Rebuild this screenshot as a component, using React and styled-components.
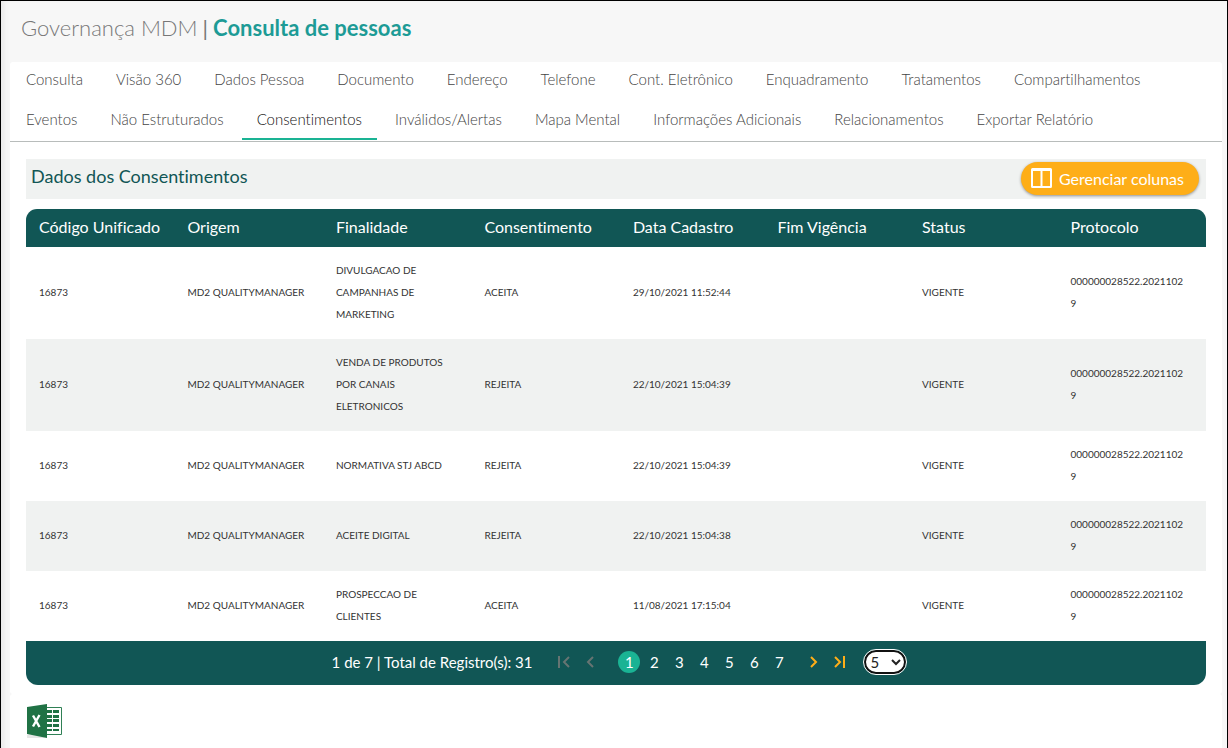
import React, { useState } from 'react';
import styled, { createGlobalStyle } from 'styled-components';

const colors = {
  page: '#f7f7f7',
  teal: '#115655',
  green: '#1ab394',
  orange: '#feae18',
  stripe: '#f0f2f1',
};

const GlobalStyle = createGlobalStyle`
  *, *::before, *::after { box-sizing: border-box; }
  body {
    margin: 0;
    font-family: Lato, "Liberation Sans", sans-serif;
    font-variant-ligatures: none;
    color: #333;
    background: ${colors.page};
  }
  button, select { font-family: inherit; }
`;

const Page = styled.div`
  min-height: 100vh;
  border: 1px solid #000;
  padding: 0 5px 0 9px;
  background: ${colors.page};
  box-shadow: inset 6px 0 6px -4px #e4e4e4;
  display: flex;
  flex-direction: column;
`;

const PageHeader = styled.header`
  height: 61px;
  padding: 12px 11px 0;
`;

const PageTitle = styled.h1`
  margin: 0;
  font-size: 22px;
  line-height: 30px;
  font-weight: 300;
  color: #777;
`;

const TitleBar = styled.span`
  font-weight: 400;
  margin: 0 5px;
`;

const TitleStrong = styled.strong`
  font-weight: 700;
  color: #1d9b96;
`;

const Card = styled.section`
  background: #fff;
  border-radius: 3px;
`;

const Tabs = styled.nav`
  display: flex;
  flex-wrap: wrap;
  gap: 2px 3px;
  padding: 0 1px 1px;
  border-bottom: 1px solid #b8bcbb;
`;

const Tab = styled.a`
  height: 38px;
  padding: 0 15px;
  font-size: 15px;
  font-weight: 300;
  line-height: 34px;
  white-space: nowrap;
  text-decoration: none;
  color: ${(p) => (p.$active ? '#111' : '#444')};
  border-bottom: 2px solid ${(p) => (p.$active ? colors.green : 'transparent')};
`;

const Content = styled.div`
  padding: 17px 16px 9px;
`;

const SectionBar = styled.div`
  display: flex;
  align-items: center;
  justify-content: space-between;
  height: 40px;
  padding: 0 7px 2px 5px;
  margin-bottom: 10px;
  background: ${colors.stripe};
`;

const SectionTitle = styled.h2`
  margin: 0;
  padding-bottom: 4px;
  font-size: 18px;
  line-height: 24px;
  font-weight: 400;
  color: ${colors.teal};
`;

const ColumnsButton = styled.button`
  display: flex;
  align-items: center;
  gap: 7px;
  height: 33px;
  padding: 0 15px 0 10px;
  border: 0;
  border-radius: 17px;
  background: ${colors.orange};
  color: #fff;
  font-size: 16px;
  box-shadow: 0 1px 3px rgba(0, 0, 0, 0.4);
  cursor: pointer;
`;

const Table = styled.table`
  width: 100%;
  table-layout: fixed;
  border-collapse: separate;
  border-spacing: 0;
`;

const Column = styled.col`
  width: ${(p) => (p.$narrow ? '12.25%' : '12.58%')};
`;

const HeadCell = styled.th`
  height: 38px;
  padding: 0 0 4px 13px;
  background: ${colors.teal};
  color: #fff;
  font-size: 16px;
  font-weight: 400;
  text-align: left;
  white-space: nowrap;
  &:first-child { border-top-left-radius: 11px; }
  &:last-child { border-top-right-radius: 11px; }
`;

const Row = styled.tr`
  &:nth-child(even) { background: ${colors.stripe}; }
`;

const Cell = styled.td`
  padding: 12px 18px 14px 13px;
  font-size: 10px;
  line-height: 22px;
  vertical-align: middle;
  overflow-wrap: anywhere;
`;

const Pager = styled.footer`
  display: flex;
  align-items: center;
  justify-content: center;
  height: 44px;
  padding: 0 0 3px 6px;
  border-radius: 0 0 12px 12px;
  background: ${colors.teal};
  color: #fff;
`;

const Summary = styled.span`
  font-size: 15px;
  margin-right: 22px;
`;

const ArrowButton = styled.button`
  display: flex;
  align-items: center;
  justify-content: center;
  width: 24px;
  height: 24px;
  padding: 0;
  border: 0;
  background: none;
  color: ${(p) => (p.$accent ? colors.orange : '#667472')};
`;

const Pages = styled.div`
  display: flex;
  gap: 3px;
  margin: 0 12px 0 16px;
`;

const PageButton = styled.button`
  width: 22px;
  height: 22px;
  padding: 0;
  border: 0;
  border-radius: 50%;
  background: ${(p) => (p.$current ? colors.green : 'none')};
  color: #fff;
  font-size: 15px;
`;

const PageSize = styled.select`
  width: 42px;
  height: 24px;
  margin-left: 14px;
  border: 2px solid #111;
  border-radius: 12px;
  outline: 1px solid #fff;
  background: #fff;
  color: #222;
  font-size: 15px;
`;

const ExportCard = styled(Card)`
  flex: 1;
  padding: 9px 16px;
`;

const ExportButton = styled.button`
  display: block;
  padding: 0;
  border: 0;
  background: none;
  cursor: pointer;
`;

const tabs = [
  'Consulta', 'Visão 360', 'Dados Pessoa', 'Documento', 'Endereço', 'Telefone',
  'Cont. Eletrônico', 'Enquadramento', 'Tratamentos', 'Compartilhamentos',
  'Eventos', 'Não Estruturados', 'Consentimentos', 'Inválidos/Alertas',
  'Mapa Mental', 'Informações Adicionais', 'Relacionamentos', 'Exportar Relatório',
];

const columns = [
  { label: 'Código Unificado' },
  { label: 'Origem' },
  { label: 'Finalidade' },
  { label: 'Consentimento' },
  { label: 'Data Cadastro', narrow: true },
  { label: 'Fim Vigência', narrow: true },
  { label: 'Status' },
  { label: 'Protocolo' },
];

const protocol = '000000028522.20211029';
const rows = [
  ['16873', 'MD2 QUALITYMANAGER', 'DIVULGACAO DE CAMPANHAS DE MARKETING', 'ACEITA', '29/10/2021 11:52:44', '', 'VIGENTE', protocol],
  ['16873', 'MD2 QUALITYMANAGER', 'VENDA DE PRODUTOS POR CANAIS ELETRONICOS', 'REJEITA', '22/10/2021 15:04:39', '', 'VIGENTE', protocol],
  ['16873', 'MD2 QUALITYMANAGER', 'NORMATIVA STJ ABCD', 'REJEITA', '22/10/2021 15:04:39', '', 'VIGENTE', protocol],
  ['16873', 'MD2 QUALITYMANAGER', 'ACEITE DIGITAL', 'REJEITA', '22/10/2021 15:04:38', '', 'VIGENTE', protocol],
  ['16873', 'MD2 QUALITYMANAGER', 'PROSPECCAO DE CLIENTES', 'ACEITA', '11/08/2021 17:15:04', '', 'VIGENTE', protocol],
];

const ColumnsIcon = () => (
  <svg width="21" height="20" viewBox="0 0 21 20" aria-hidden="true">
    <path fill="#fff" fillRule="evenodd" d="M1.5 0h18A1.5 1.5 0 0 1 21 1.5v17a1.5 1.5 0 0 1-1.5 1.5h-18A1.5 1.5 0 0 1 0 18.5v-17A1.5 1.5 0 0 1 1.5 0ZM2 3v15h7.500V3Zm9.500 0v15H19V3Z" />
  </svg>
);

const Chevron = ({ back, bar }) => (
  <svg width="16" height="14" viewBox="0 0 16 14" fill="none" stroke="currentColor" strokeWidth="2" aria-hidden="true">
    {back ? <path d="M11 2 6 7l5 5" /> : <path d="m5 2 5 5-5 5" />}
    {bar && (back ? <path d="M1 1v12" /> : <path d="M14 1v12" />)}
  </svg>
);

const ExcelIcon = () => (
  <svg width="38" height="37" viewBox="0 0 38 37" aria-hidden="true">
    <path d="M1 32h12l7 3H1Z" fill="#e6e6e6" />
    <path d="M19 4.500h16.500v27H19Z" fill="#fff" stroke="#2f8055" />
    <path fill="#207245" d="M21 7h5v3h-5Zm6 0h6v3h-6ZM21 12h5v3h-5Zm6 0h6v3h-6ZM21 16h5v3h-5Zm6 0h6v3h-6ZM21 21h5v3h-5Zm6 0h6v3h-6ZM21 26h5v2h-5Zm6 0h6v2h-6Z" />
    <path fill="#207245" d="M1 4 21 1v34L1 31Z" />
    <path fill="none" stroke="#fff" strokeWidth="2.400" d="m7 12.500 6.500 11.500M13.500 12 7 23.500" />
  </svg>
);

export default function App() {
  const [size, setSize] = useState('5');
  return (
    <>
      <GlobalStyle />
      <Page>
        <PageHeader>
          <PageTitle>
            Governança MDM<TitleBar>|</TitleBar><TitleStrong>Consulta de pessoas</TitleStrong>
          </PageTitle>
        </PageHeader>
        <Card>
          <Tabs>
            {tabs.map((t) => (
              <Tab key={t} href="#" $active={t === 'Consentimentos'}>{t}</Tab>
            ))}
          </Tabs>
          <Content>
            <SectionBar>
              <SectionTitle>Dados dos Consentimentos</SectionTitle>
              <ColumnsButton type="button"><ColumnsIcon />Gerenciar colunas</ColumnsButton>
            </SectionBar>
            <Table>
              <colgroup>
                {columns.map((c) => <Column key={c.label} $narrow={c.narrow} />)}
              </colgroup>
              <thead>
                <tr>{columns.map((c) => <HeadCell key={c.label} scope="col">{c.label}</HeadCell>)}</tr>
              </thead>
              <tbody>
                {rows.map((r, i) => (
                  <Row key={i}>{r.map((v, j) => <Cell key={j}>{v}</Cell>)}</Row>
                ))}
              </tbody>
            </Table>
            <Pager>
              <Summary>1 de 7 | Total de Registro(s): 31</Summary>
              <ArrowButton type="button" disabled aria-label="Primeira página"><Chevron back bar /></ArrowButton>
              <ArrowButton type="button" disabled aria-label="Página anterior"><Chevron back /></ArrowButton>
              <Pages>
                {[1, 2, 3, 4, 5, 6, 7].map((n) => (
                  <PageButton key={n} type="button" $current={n === 1}>{n}</PageButton>
                ))}
              </Pages>
              <ArrowButton type="button" $accent aria-label="Próxima página"><Chevron /></ArrowButton>
              <ArrowButton type="button" $accent aria-label="Última página"><Chevron bar /></ArrowButton>
              <PageSize aria-label="Registros por página" value={size} onChange={(e) => setSize(e.target.value)}>
                <option>5</option>
                <option>10</option>
                <option>20</option>
              </PageSize>
            </Pager>
          </Content>
        </Card>
        <ExportCard>
          <ExportButton type="button" aria-label="Exportar para Excel"><ExcelIcon /></ExportButton>
        </ExportCard>
      </Page>
    </>
  );
}
